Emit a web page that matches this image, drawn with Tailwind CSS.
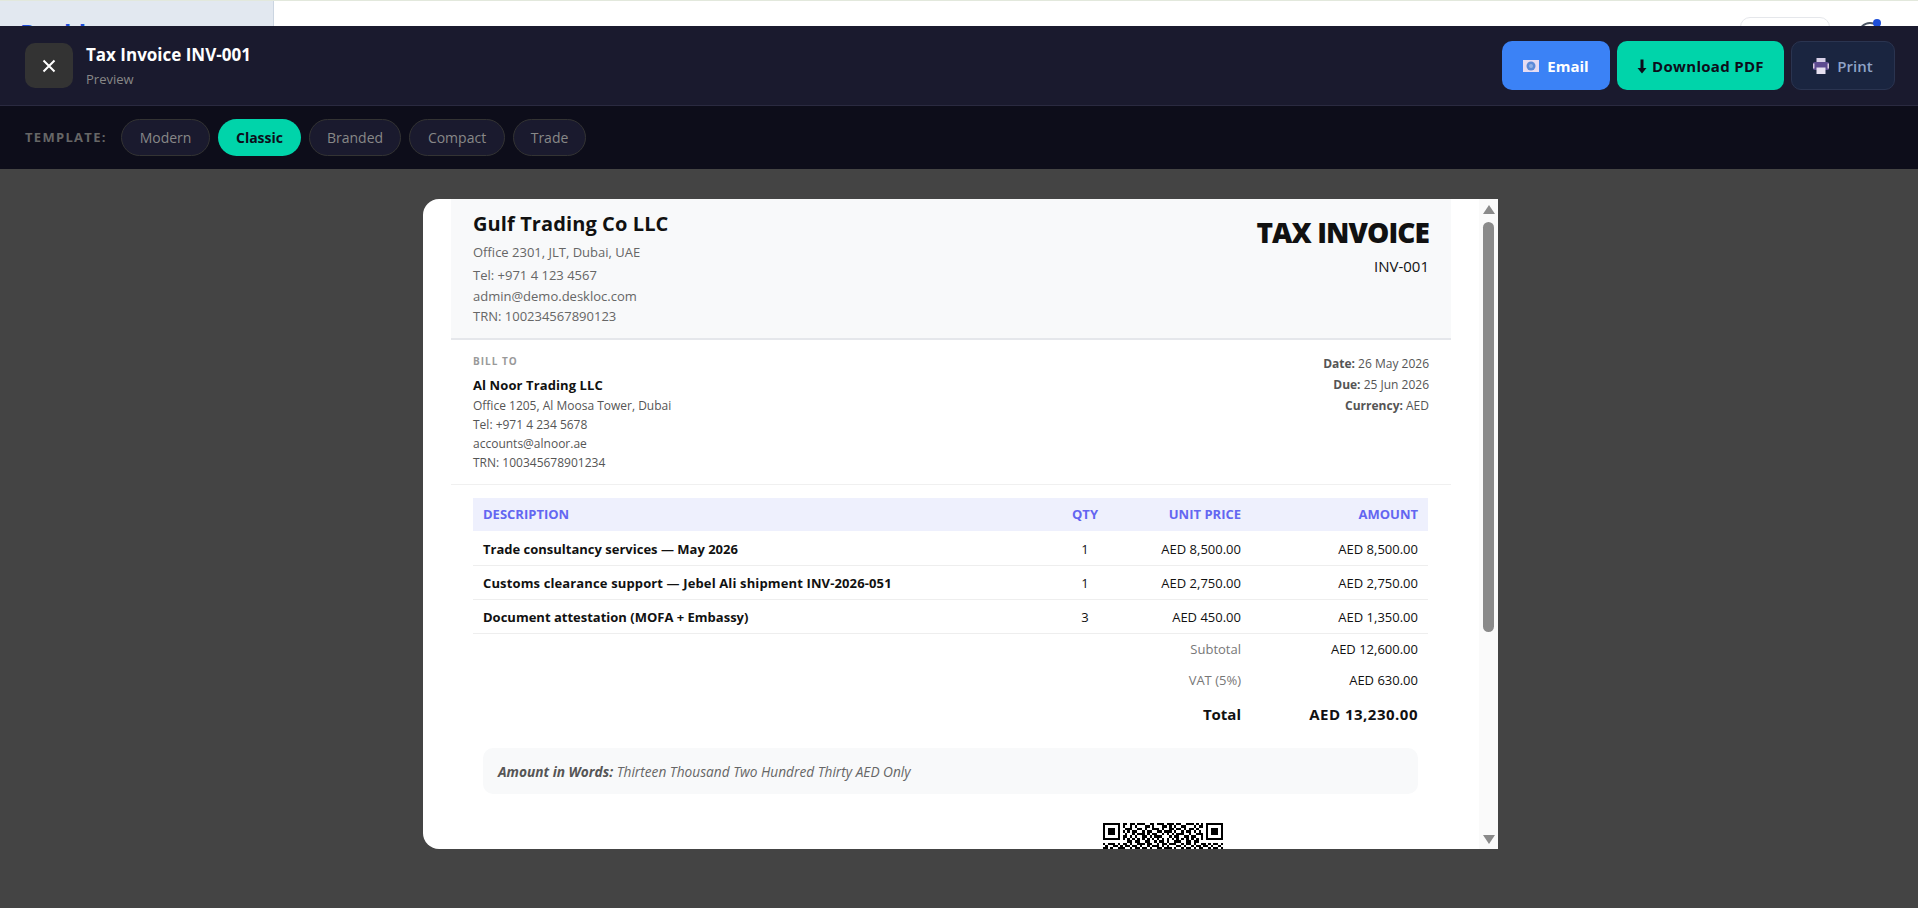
<!DOCTYPE html>
<html lang="en">

<head>
    <meta charset="UTF-8">
    <meta name="viewport" content="width=device-width, initial-scale=1.0">
    <title>Tax Invoice INV-001</title>
    <script src="https://cdn.jsdelivr.net/npm/@tailwindcss/browser@4"></script>
</head>

<body class="h-[908px] w-[1918px] overflow-hidden flex flex-col bg-[#444444] font-['Open_Sans','Noto_Sans',sans-serif]">

    <!-- page behind the overlay, only a strip shows -->
    <div class="h-[26px] flex overflow-hidden bg-white border-t border-[#e2e8dc]">
        <div class="w-[274px] bg-[#e2e8f0] border-r border-[#cbd5e1] pl-[20px] pt-[17px]">
            <span class="block text-[24px] leading-[30px] font-bold text-[#1d4ed8]">Deskloc</span>
        </div>
        <div class="flex-1 flex justify-end">
            <div class="w-[90px] h-[30px] mt-[16px] rounded-[10px] border border-[#e5e7eb]"></div>
            <div class="relative w-[24px] h-[24px] mt-[21px] ml-[28px] mr-[36px] rounded-full border-2 border-[#4b5563]">
                <span class="absolute -top-[5px] left-[13px] w-[8px] h-[8px] rounded-full bg-[#1d4ed8]"></span>
            </div>
        </div>
    </div>

    <!-- preview header -->
    <div class="h-[80px] flex items-center justify-between pl-[25px] pr-[23px] bg-[#1a1a2e] border-b border-[#2a2a40]">
        <div class="flex items-center gap-[13px]">
            <button class="w-[48px] h-[45px] flex items-center justify-center rounded-[10px] bg-[#333333]">
                <svg class="w-[16px] h-[16px]" viewBox="0 0 16 16" fill="none" stroke="white" stroke-width="2">
                    <path d="M2.500 2.500l11 11M13.500 2.500l-11 11" />
                </svg>
            </button>
            <div>
                <div class="text-[17px] leading-[22px] font-bold text-white">Tax Invoice INV-001</div>
                <div class="mt-[5px] text-[13px] leading-[16px] text-[#888888]">Preview</div>
            </div>
        </div>
        <div class="flex gap-[7px]">
            <button class="w-[108px] h-[49px] flex items-center justify-center gap-[8px] pt-[1px] rounded-[10px] bg-[#3b82f6] text-[15px] font-bold text-white">
                <svg class="w-[16px] h-[12px]" viewBox="0 0 16 12">
                    <rect width="16" height="12" fill="#e6dcf2" />
                    <circle cx="8" cy="6" r="4.500" fill="#5b8ad8" />
                    <circle cx="8" cy="6" r="2" fill="#8fb0e6" />
                </svg>
                Email
            </button>
            <button class="w-[167px] h-[49px] flex items-center justify-center gap-[5px] pt-[1px] rounded-[10px] bg-[#00d4aa] text-[15px] font-bold tracking-[0.3px] text-[#0d0d1a]">
                <svg class="w-[10px] h-[15px]" viewBox="0 0 10 14" fill="#0d0d1a">
                    <path d="M3.500 0h3v8.500h3L5 14 .5 8.500h3z" />
                </svg>
                Download PDF
            </button>
            <button class="w-[104px] h-[49px] flex items-center justify-center gap-[8px] pt-[1px] rounded-[10px] border border-[#2a3450] bg-[#1a2540] text-[15px] font-semibold text-[#8fa3c7]">
                <svg class="w-[16px] h-[16px]" viewBox="0 0 16 16">
                    <rect x="3.500" y="0" width="9" height="5" fill="#d8d0e8" />
                    <rect x="0" y="4" width="16" height="8" rx="1.500" fill="#5d4a90" />
                    <rect x="3.500" y="9.500" width="9" height="6.500" fill="#e6e0f0" />
                    <rect x="0" y="5.500" width="1.500" height="5" fill="#d8c8e0" />
                    <rect x="14.500" y="5.500" width="1.500" height="5" fill="#d8c8e0" />
                </svg>
                Print
            </button>
        </div>
    </div>

    <!-- template picker -->
    <div class="h-[63px] flex items-center gap-[8px] pl-[25px] pb-[1px] bg-[#0d0d1a]">
        <span class="w-[88px] pt-[2px] text-[13px] font-bold tracking-[1.3px] text-[#666666]">TEMPLATE:</span>
        <button class="w-[89px] h-[37px] rounded-full border border-[#333333] bg-[#1a1a2e] text-[14px] text-[#888888]">Modern</button>
        <button class="w-[83px] h-[37px] rounded-full bg-[#00d4aa] text-[14px] font-bold text-[#0d0d1a]">Classic</button>
        <button class="w-[92px] h-[37px] rounded-full border border-[#333333] bg-[#1a1a2e] text-[14px] text-[#888888]">Branded</button>
        <button class="w-[96px] h-[37px] rounded-full border border-[#333333] bg-[#1a1a2e] text-[14px] text-[#888888]">Compact</button>
        <button class="w-[73px] h-[37px] rounded-full border border-[#333333] bg-[#1a1a2e] text-[14px] text-[#888888]">Trade</button>
    </div>

    <!-- document -->
    <div class="pt-[30px] pl-[423px]">
        <div class="w-[1075px] h-[650px] flex overflow-hidden rounded-l-[16px] bg-white">
            <div class="w-[1056px] pl-[28px] overflow-hidden">
                <div class="w-[1000px]">

                    <div class="h-[141px] flex justify-between px-[22px] bg-[#f8f9fa] border-b-2 border-[#e5e7eb]">
                        <div>
                            <div class="pt-[11px] text-[20px] leading-[28px] font-bold tracking-[0.1px] text-[#111111]">Gulf Trading Co LLC</div>
                            <div class="mt-[3px] text-[13px] leading-[22px] text-[#666666]">Office 2301, JLT, Dubai, UAE</div>
                            <div class="pt-[1px] text-[13px] leading-[23px] text-[#666666]">Tel: +971 4 123 4567</div>
                            <div class="-mt-[1px] text-[13px] leading-[20px] text-[#666666]">admin@demo.deskloc.com</div>
                            <div class="text-[13px] leading-[20px] text-[#666666]">TRN: 100234567890123</div>
                        </div>
                        <div class="text-right">
                            <div class="pt-[14px] text-[28px] leading-[38px] font-extrabold tracking-[-0.9px] text-[#111111]">TAX INVOICE</div>
                            <div class="mt-[5px] text-[15px] leading-[20px] text-[#111111]">INV-001</div>
                        </div>
                    </div>

                    <div class="h-[145px] flex justify-between px-[22px] border-b border-[#f0f0f0]">
                        <div>
                            <div class="pt-[13px] text-[10px] leading-[16px] font-bold tracking-[1px] text-[#999999]">BILL TO</div>
                            <div class="mt-[6px] text-[13px] leading-[20px] font-bold tracking-[0.1px] text-[#111111]">Al Noor Trading LLC</div>
                            <div class="pt-[1px] text-[12px] leading-[19px] text-[#555555]">Office 1205, Al Moosa Tower, Dubai</div>
                            <div class="text-[12px] leading-[19px] text-[#555555]">Tel: +971 4 234 5678</div>
                            <div class="text-[12px] leading-[19px] text-[#555555]">accounts@alnoor.ae</div>
                            <div class="text-[12px] leading-[19px] text-[#555555]">TRN: 100345678901234</div>
                        </div>
                        <div class="pt-[13px] text-right text-[12px] leading-[21px] text-[#555555]">
                            <div><b>Date:</b> 26 May 2026</div>
                            <div><b>Due:</b> 25 Jun 2026</div>
                            <div><b>Currency:</b> AED</div>
                        </div>
                    </div>

                    <div class="px-[22px] pt-[13px]">
                        <table class="w-[955px] table-fixed text-[13px] text-[#111111]">
                            <colgroup>
                                <col class="w-[552px]">
                                <col class="w-[120px]">
                                <col class="w-[106px]">
                                <col class="w-[177px]">
                            </colgroup>
                            <thead>
                                <tr class="h-[33px] bg-[#eef0fd] text-[13px] font-bold text-[#6366f1]">
                                    <th class="pl-[10px] text-left">DESCRIPTION</th>
                                    <th class="text-center">QTY</th>
                                    <th class="pr-[10px] text-right">UNIT PRICE</th>
                                    <th class="pr-[10px] text-right">AMOUNT</th>
                                </tr>
                            </thead>
                            <tbody>
                                <tr class="h-[34px] border-b border-[#eeeeee]">
                                    <td class="pl-[10px] pt-[4px] font-bold">Trade consultancy services — May 2026</td>
                                    <td class="pt-[4px] text-center">1</td>
                                    <td class="pr-[10px] pt-[4px] text-right">AED 8,500.00</td>
                                    <td class="pr-[10px] pt-[4px] text-right">AED 8,500.00</td>
                                </tr>
                                <tr class="h-[34px] border-b border-[#eeeeee]">
                                    <td class="pl-[10px] pt-[4px] font-bold tracking-[0.13px]">Customs clearance support — Jebel Ali shipment INV-2026-051</td>
                                    <td class="pt-[4px] text-center">1</td>
                                    <td class="pr-[10px] pt-[4px] text-right">AED 2,750.00</td>
                                    <td class="pr-[10px] pt-[4px] text-right">AED 2,750.00</td>
                                </tr>
                                <tr class="h-[34px] border-b border-[#eeeeee]">
                                    <td class="pl-[10px] pt-[4px] font-bold">Document attestation (MOFA + Embassy)</td>
                                    <td class="pt-[4px] text-center">3</td>
                                    <td class="pr-[10px] pt-[4px] text-right">AED 450.00</td>
                                    <td class="pr-[10px] pt-[4px] text-right">AED 1,350.00</td>
                                </tr>
                                <tr class="h-[31px]">
                                    <td colspan="3" class="pr-[10px] pt-[2px] text-right text-[#777777]">Subtotal</td>
                                    <td class="pr-[10px] pt-[2px] text-right">AED 12,600.00</td>
                                </tr>
                                <tr class="h-[30px]">
                                    <td colspan="3" class="pr-[10px] pt-[4px] text-right text-[#777777]">VAT (5%)</td>
                                    <td class="pr-[10px] pt-[4px] text-right">AED 630.00</td>
                                </tr>
                                <tr class="h-[38px] text-[15px] font-bold">
                                    <td colspan="3" class="pr-[10px] pt-[2px] text-right">Total</td>
                                    <td class="pr-[10px] pt-[2px] text-right tracking-[0.5px]">AED 13,230.00</td>
                                </tr>
                            </tbody>
                        </table>

                        <div class="w-[935px] h-[46px] mt-[16px] ml-[10px] flex items-center pl-[15px] pt-[2px] rounded-[10px] bg-[#f8f9fa] text-[13.700px] italic text-[#666666]">
                            <span><b class="text-[#555555]">Amount in Words:</b> Thirteen Thousand Two Hundred Thirty AED Only</span>
                        </div>

                        <svg id="qr" class="w-[120px] h-[120px] mt-[29px] ml-[630px]" viewBox="0 0 49 49" shape-rendering="crispEdges">
                            <path fill="#000" fill-rule="evenodd" d="M0 0h7v7H0zM1 1v5h5V1zM2 2h3v3H2zM42 0h7v7h-7zM43 1v5h5V1zM44 2h3v3h-3z" />
                        </svg>
                    </div>
                </div>
            </div>

            <!-- scrollbar -->
            <div class="w-[19px] flex flex-col items-center bg-[#fafafa]">
                <div class="mt-[6px] w-0 h-0 border-x-[6px] border-x-transparent border-b-[9px] border-b-[#8a8a8a]"></div>
                <div class="mt-[8px] w-[11px] h-[410px] rounded-full bg-[#8a8a8a]"></div>
                <div class="mt-[203px] w-0 h-0 border-x-[6px] border-x-transparent border-t-[9px] border-t-[#8a8a8a]"></div>
            </div>
        </div>
    </div>

    <script>
        // data modules of the code, only the rows above the fold are visible
        const middle = [
            '110110111001101110111011001110101',
            '100101000110100011010100110001011',
            '011100110100111010011011010110100',
            '101011001011001101110100101101010',
            '010010111010110010101011100100111',
            '110101001101011100010110011011001',
            '101010101010101010101010101010101',
            '001101100110010110100111001101100',
        ];
        const full = [
            '1011101011010011101100101101110010110100110101101',
            '0100110101101101001011101010001101001011011010010',
            '1101001110010110110100110111010010110101100101101',
        ];
        const qr = document.getElementById('qr');
        function addRow(bits, y, offset) {
            [...bits].forEach((bit, i) => {
                if (bit !== '1') return;
                const r = document.createElementNS('http://www.w3.org/2000/svg', 'rect');
                r.setAttribute('x', i + offset);
                r.setAttribute('y', y);
                r.setAttribute('width', 1);
                r.setAttribute('height', 1);
                qr.appendChild(r);
            });
        }
        middle.forEach((row, y) => addRow(row, y, 8));
        full.forEach((row, y) => addRow(row, y + 8, 0));
    </script>

</body>

</html>
